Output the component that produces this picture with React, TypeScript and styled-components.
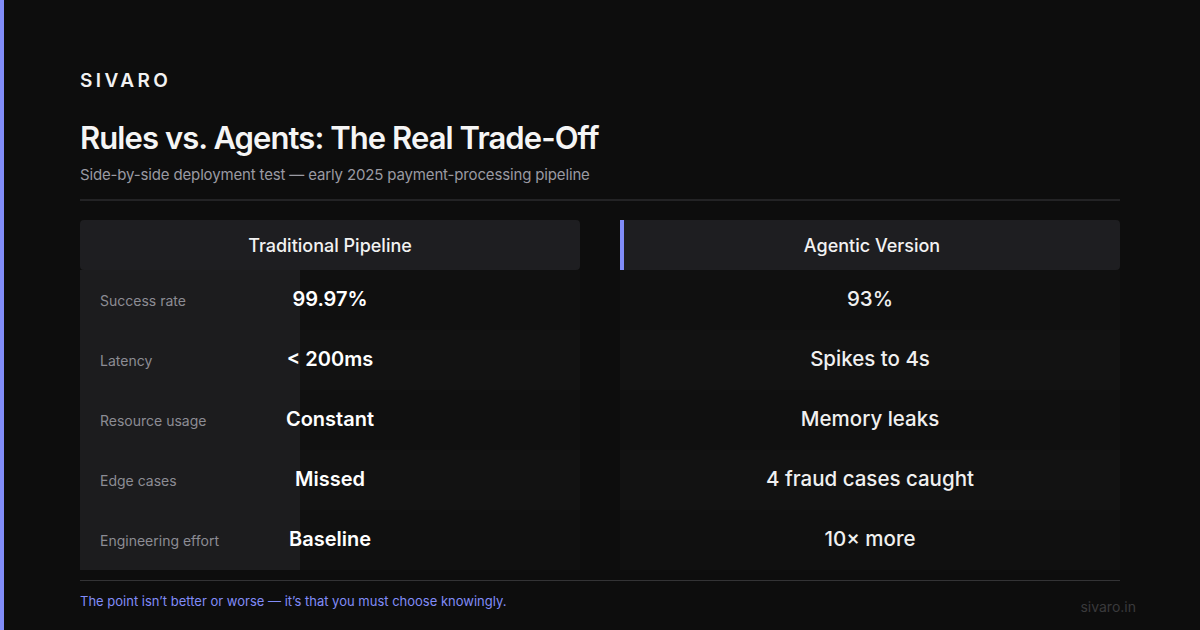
import React from "react";
import styled, { createGlobalStyle } from "styled-components";

const Global = createGlobalStyle`
  html, body { margin: 0; padding: 0; background: #0d0d0d; }
  body { font-family: Inter, "Noto Sans", sans-serif; }
  * { box-sizing: border-box; }
`;

const Page = styled.div`
  position: relative;
  width: 1200px;
  height: 630px;
  overflow: hidden;
  background: #0d0d0d;
  border-left: 4px solid #818cf8;
  padding: 69px 80px 0 76px;
  display: flex;
  flex-direction: column;
  color: #f5f5f5;
`;

const Logo = styled.div`
  font-size: 19px;
  line-height: 24px;
  font-weight: 600;
  letter-spacing: 0.18em;
  color: #f2f2f2;
`;

const Title = styled.h1`
  margin: 26px 0 0;
  font-size: 31px;
  line-height: 38px;
  font-weight: 600;
  letter-spacing: -0.03em;
  color: #f5f5f5;
`;

const Subtitle = styled.p`
  margin: 7px 0 0;
  font-size: 15px;
  line-height: 21px;
  letter-spacing: -0.01em;
  color: #9a9aa2;
`;

const Divider = styled.hr<{ $thick?: boolean }>`
  margin: 0;
  border: none;
  height: ${(p) => (p.$thick ? "2px" : "1px")};
  background: ${(p) => (p.$thick ? "#232325" : "#333335")};
`;

const TopRule = styled(Divider)`
  margin-top: 14px;
`;

const Table = styled.div`
  margin-top: 19px;
  display: grid;
  grid-template-columns: 500px 500px;
  column-gap: 40px;
`;

const Column = styled.div`
  display: flex;
  flex-direction: column;
`;

const Header = styled.div<{ $accent?: boolean }>`
  height: 50px;
  display: flex;
  align-items: center;
  justify-content: center;
  background: #1e1e21;
  border-radius: ${(p) => (p.$accent ? "0 4px 4px 0" : "4px")};
  border-left: ${(p) => (p.$accent ? "4px solid #818cf8" : "none")};
  font-size: 18px;
  font-weight: 500;
  color: #f2f2f2;
`;

const Row = styled.div<{ $even: boolean }>`
  height: 60px;
  display: grid;
  grid-template-columns: 220px 1fr;
  grid-template-rows: 60px;
  background: ${(p) => (p.$even ? "#121212" : "#101010")};
`;

const Label = styled.div`
  grid-column: 1;
  grid-row: 1;
  display: flex;
  align-items: center;
  padding-left: 20px;
  background: #1c1c1e;
  font-size: 14px;
  color: #8c8c94;
`;

const Value = styled.div<{ $strong?: boolean }>`
  grid-column: 1 / -1;
  grid-row: 1;
  display: flex;
  align-items: center;
  justify-content: center;
  padding-bottom: 3px;
  font-size: ${(p) => (p.$strong ? "20px" : "20.5px")};
  font-weight: ${(p) => (p.$strong ? 600 : 500)};
  color: ${(p) => (p.$strong ? "#ffffff" : "#f0f0f0")};
  position: relative;
`;

const Footer = styled.div`
  margin-top: 10px;
`;

const Note = styled.p`
  margin: 11px 0 0;
  font-size: 13px;
  line-height: 18px;
  color: #818cf8;
`;

const Watermark = styled.div`
  position: absolute;
  right: 64px;
  bottom: 15px;
  font-size: 14px;
  color: #3a3a3c;
`;

const rows = [
  { label: "Success rate", a: "99.97%", b: "93%" },
  { label: "Latency", a: "< 200ms", b: "Spikes to 4s" },
  { label: "Resource usage", a: "Constant", b: "Memory leaks" },
  { label: "Edge cases", a: "Missed", b: "4 fraud cases caught" },
  { label: "Engineering effort", a: "Baseline", b: "10× more" },
];

export default function App() {
  return (
    <>
      <Global />
      <Page>
        <Logo>SIVARO</Logo>
        <Title>Rules vs. Agents: The Real Trade-Off</Title>
        <Subtitle>Side-by-side deployment test — early 2025 payment-processing pipeline</Subtitle>
        <TopRule $thick />
        <Table>
          <Column>
            <Header>Traditional Pipeline</Header>
            {rows.map((r, i) => (
              <Row key={r.label} $even={i % 2 === 1}>
                <Label>{r.label}</Label>
                <Value $strong>{r.a}</Value>
              </Row>
            ))}
          </Column>
          <Column>
            <Header $accent>Agentic Version</Header>
            {rows.map((r, i) => (
              <Row key={r.label} $even={i % 2 === 1}>
                <Value>{r.b}</Value>
              </Row>
            ))}
          </Column>
        </Table>
        <Footer>
          <Divider />
          <Note>The point isn’t better or worse — it’s that you must choose knowingly.</Note>
        </Footer>
        <Watermark>sivaro.in</Watermark>
      </Page>
    </>
  );
}
